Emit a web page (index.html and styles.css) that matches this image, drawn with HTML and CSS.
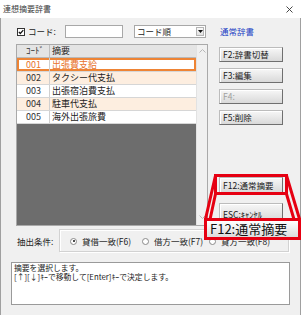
FILE: index.html
```html
<!DOCTYPE html>
<html lang="ja">
<head>
<meta charset="utf-8">
<title>連想摘要辞書</title>
<link rel="stylesheet" href="styles.css">
</head>
<body>
<div class="window">
  <div class="titlebar">
    <span class="title">連想摘要辞書</span>
    <svg class="close" viewBox="0 0 7 7" width="7" height="7"><path d="M0.5 0.5L6.5 6.5M6.5 0.5L0.5 6.5" stroke="#333" stroke-width="0.9" fill="none"/></svg>
  </div>
  <div class="main">
    <div class="left">
      <div class="toprow">
        <label class="chk">
          <svg class="box" viewBox="0 0 8 8" width="8" height="8"><rect x="0.5" y="0.5" width="7" height="7" fill="#fff" stroke="#333"/><path d="M1.8 3.8L3.3 5.5L6.3 2.2" stroke="#111" stroke-width="1.2" fill="none"/></svg>
          <span>コード:</span>
        </label>
        <span class="input"></span>
        <span class="combo"><span class="ctext">コード順</span><span class="dd"><svg viewBox="0 0 5 3" width="5" height="3"><path d="M0 0H5L2.5 3Z" fill="#111"/></svg></span></span>
      </div>
      <div class="list">
        <div class="grid">
          <div class="row head"><span class="c1">ｺｰﾄﾞ</span><span class="c2">摘要</span></div>
          <div class="row sel"><span class="c1">001</span><span class="c2">出張費支給</span></div>
          <div class="row alt"><span class="c1">002</span><span class="c2">タクシー代支払</span></div>
          <div class="row"><span class="c1">003</span><span class="c2">出張宿泊費支払</span></div>
          <div class="row alt"><span class="c1">004</span><span class="c2">駐車代支払</span></div>
          <div class="row"><span class="c1">005</span><span class="c2">海外出張旅費</span></div>
        </div>
        <div class="vscroll">
          <svg viewBox="0 0 7 4" width="7" height="4"><path d="M0.5 3.5L3.5 0.5L6.5 3.5" stroke="#b8b8b8" fill="none"/></svg>
          <svg viewBox="0 0 7 4" width="7" height="4"><path d="M0.5 0.5L3.5 3.5L6.5 0.5" stroke="#b8b8b8" fill="none"/></svg>
        </div>
      </div>
    </div>
    <div class="right">
      <div class="dict">通常辞書</div>
      <div class="btn b2">F2:辞書切替</div>
      <div class="btn b3">F3:編集</div>
      <div class="btn b4 dis">F4:</div>
      <div class="btn b5">F5:削除</div>
      <div class="btn b12">F12:通常摘要</div>
      <div class="btn besc">ESC:ｷｬﾝｾﾙ</div>
    </div>
  </div>
  <div class="filter">
    <span class="flabel">抽出条件:</span>
    <div class="group">
      <span class="radio r1"><span class="rb on"></span>貸借一致(F6)</span>
      <span class="radio r2"><span class="rb"></span>借方一致(F7)</span>
      <span class="radio r3"><span class="rb"></span>貸方一致(F8)</span>
    </div>
  </div>
  <div class="msg">
    <p>摘要を選択します。</p>
    <p>[↑][↓]ｷｰで移動して[Enter]ｷｰで決定します。</p>
  </div>

  <div class="zoomframe"></div>
  <svg class="rays" viewBox="0 0 301 315" width="301" height="315">
    <path d="M215.5 175.5L205.5 219M286.5 175.5L299.5 219M215.5 194L206 238M286.5 194L299.5 238" stroke="#e60012" stroke-width="3" fill="none"/>
  </svg>
  <div class="callout">F12:通常摘要</div>
</div>
</body>
</html>
```
FILE: styles.css
```css
* { box-sizing: border-box; margin: 0; padding: 0; }
html, body { width: 301px; height: 315px; overflow: hidden; }
body {
  font-family: "Noto Sans CJK JP", "Liberation Sans", sans-serif;
  font-size: 8.5px;
  color: #1c1c1c;
  background: #f0f0f0;
}
.window {
  position: relative;
  width: 301px;
  height: 315px;
  background: #f0f0f0;
  box-shadow: inset 1px 0 #a0a0a0, inset -1px 0 #a0a0a0;
}
.titlebar {
  height: 18px;
  background: #fff;
  display: flex;
  align-items: center;
  justify-content: space-between;
  padding: 0 8px 0 3px;
}
.title { font-size: 8px; line-height: 10px; color: #3a3a3a; }
.close { display: block; }

.main { display: flex; padding: 7px 0 0 16px; height: 208px; }
.left { width: 192px; display: flex; flex-direction: column; gap: 6px; }
.toprow { height: 13px; display: flex; align-items: center; }
.chk { width: 49px; display: flex; align-items: center; gap: 3px; padding-left: 1px; line-height: 13px; }
.box { display: block; }
.input { width: 58px; height: 13px; background: #fff; border: 1px solid #a8a8a8; }
.combo {
  margin-left: 11px; width: 72px; height: 13px; background: #fff;
  border: 1px solid #a8a8a8; display: flex; align-items: center; justify-content: space-between;
  padding: 0 1px 0 2px;
}
.ctext { line-height: 11px; }
.dd {
  width: 8px; height: 9px; border: 1px solid #b5b5b5; background: linear-gradient(#fafafa, #e2e2e2);
  display: flex; align-items: center; justify-content: center;
}
.dd svg { display: block; }

.list { height: 182px; border: 1px solid #a9a9a9; display: flex; background: #6d6d6d; }
.grid { flex: 1; display: flex; flex-direction: column; }
.row {
  height: 13px; display: grid; grid-template-columns: 33px 1fr; background: #fff;
  border-bottom: 1px solid #d6d6d6; line-height: 12px; font-size: 9px;
}
.row .c1 { padding-left: 9px; border-right: 1px solid #d0d0d0; color: #333; }
.row .c2 { padding-left: 2px; }
.row.head { background: #e4e4e4; border-bottom: 1px solid #b9b9b9; height: 13px; }
.row.head .c1 { padding-left: 9px; border-right-color: #bdbdbd; }
.row.alt { background: #fdeee0; }
.row.sel { box-shadow: inset 0 0 0 2px #ee8435; color: #e8742c; height: 14px; line-height: 13px; }
.row.sel .c1 { color: #e8742c; }
.vscroll {
  width: 11px; background: #f0f0f0; border-left: 1px solid #e2e2e2;
  display: flex; flex-direction: column; justify-content: space-between; align-items: center;
  padding: 4px 0 6px;
}
.vscroll svg { display: block; }

.right { margin-left: 11px; width: 64px; display: flex; flex-direction: column; }
.dict { height: 13px; line-height: 13px; padding-left: 1px; color: #2140c4; }
.btn {
  height: 15px; line-height: 13px; padding-left: 3px;
  background: linear-gradient(#f7f7f7, #d9d9d9);
  border: 1px solid #bcbcbc; border-right-color: #6f6f6f; border-bottom-color: #6f6f6f;
  box-shadow: inset 1px 1px #ffffff;
  color: #1a1a1a;
}
.b2 { margin-top: 9px; }
.b3, .b4, .b5 { margin-top: 6px; }
.dis { color: #a0a0a0; }
.b12 { margin-top: 52px; height: 16px; line-height: 14px; }
.besc { margin-top: 10px; height: 18px; line-height: 20px; }

.filter { margin-top: 3px; height: 23px; display: flex; align-items: center; padding-left: 17px; }
.flabel { width: 42px; }
.group {
  width: 230px; height: 23px; border: 1px solid #d2d2d2; box-shadow: inset 1px 1px #fff, 1px 1px #fff;
  display: flex; align-items: center; padding-left: 10px; padding-top: 1px;
}
.radio { display: flex; align-items: center; gap: 5px; line-height: 12px; }
.r1 { width: 72px; }
.r2 { width: 67px; }
.rb {
  width: 7px; height: 7px; border-radius: 50%; border: 1px solid #8a8a8a; background: #fff; position: relative;
}
.rb.on::after {
  content: ""; position: absolute; left: 1.5px; top: 1.5px; width: 2px; height: 2px; border-radius: 50%; background: #111;
}

.msg {
  margin: 10px 11px 0; height: 43px; background: #fff; border: 1px solid #9a9a9a;
  padding: 0 2px; font-size: 7.8px; line-height: 9px; color: #222;
}

.zoomframe {
  position: absolute; left: 214px; top: 174px; width: 74px; height: 21px; border: 3px solid #e60012;
}
.rays { position: absolute; left: 0; top: 0; pointer-events: none; }
.callout {
  position: absolute; left: 204px; top: 218px; width: 97px; height: 22px;
  border: 3px solid #e60012; background: linear-gradient(#ffffff, #dcdcdc);
  font-size: 13px; line-height: 16px; padding-left: 3px; color: #111;
}
```
